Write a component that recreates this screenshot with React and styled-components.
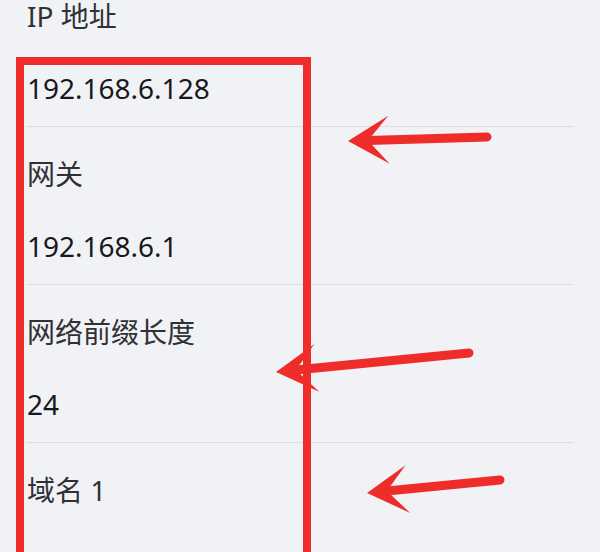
import React from 'react';
import styled, { createGlobalStyle } from 'styled-components';

const GlobalStyle = createGlobalStyle`
  html, body {
    margin: 0;
    padding: 0;
    background: #f1f2f5;
  }
  body {
    font-family: "Noto Sans", "Noto Sans CJK SC", sans-serif;
  }
`;

const Screen = styled.div`
  position: relative;
  width: 600px;
  height: 552px;
  overflow: hidden;
  background: #f1f2f5;
`;

const List = styled.div`
  margin-top: -31px;
  padding: 0 26px;
`;

const Item = styled.div`
  display: flex;
  flex-direction: column;
  gap: 32px;
  padding: 27px 0 18px 1px;
  border-bottom: 1px solid #dcdde0;
`;

const Label = styled.div`
  height: 40px;
  line-height: 40px;
  font-size: 28px;
  color: #303135;
  white-space: nowrap;
`;

const Value = styled.div`
  height: 40px;
  line-height: 40px;
  font-size: 28px;
  color: #18181a;
  white-space: nowrap;
`;

const Highlight = styled.div`
  position: absolute;
  left: 16px;
  top: 57px;
  width: 295px;
  height: 540px;
  box-sizing: border-box;
  border: 8px solid #ee2d2a;
  pointer-events: none;
`;

const Marks = styled.svg`
  position: absolute;
  left: 0;
  top: 0;
  pointer-events: none;
`;

const items = [
  { label: 'IP 地址', value: '192.168.6.128' },
  { label: '网关', value: '192.168.6.1' },
  { label: '网络前缀长度', value: '24' },
  { label: '域名 1', value: '192.168.6.1' },
];

const arrows = [
  { tip: [348, 141], tail: [487, 137] },
  { tip: [276, 372], tail: [469, 353] },
  { tip: [367, 493], tail: [500, 480] },
];

const Arrow = ({ tip, tail }) => {
  const [tx, ty] = tip;
  const [ex, ey] = tail;
  const len = Math.hypot(ex - tx, ey - ty);
  const dx = (ex - tx) / len;
  const dy = (ey - ty) / len;
  const nx = -dy;
  const ny = dx;
  const back = 41;
  const spread = 24;
  const notch = 20;
  const pt = (a, b) => `${tx + dx * a + nx * b},${ty + dy * a + ny * b}`;
  return (
    <g fill="#ee2d2a">
      <line
        x1={tx + dx * notch}
        y1={ty + dy * notch}
        x2={ex}
        y2={ey}
        stroke="#ee2d2a"
        strokeWidth="9"
        strokeLinecap="round"
      />
      <polygon points={`${pt(0, 0)} ${pt(back, -spread)} ${pt(notch, 0)} ${pt(back, spread)}`} />
    </g>
  );
};

export default function App() {
  return (
    <Screen>
      <GlobalStyle />
      <List>
        {items.map((item) => (
          <Item key={item.label}>
            <Label>{item.label}</Label>
            <Value>{item.value}</Value>
          </Item>
        ))}
      </List>
      <Highlight />
      <Marks width="600" height="552" viewBox="0 0 600 552">
        {arrows.map((a, i) => (
          <Arrow key={i} tip={a.tip} tail={a.tail} />
        ))}
      </Marks>
    </Screen>
  );
}
